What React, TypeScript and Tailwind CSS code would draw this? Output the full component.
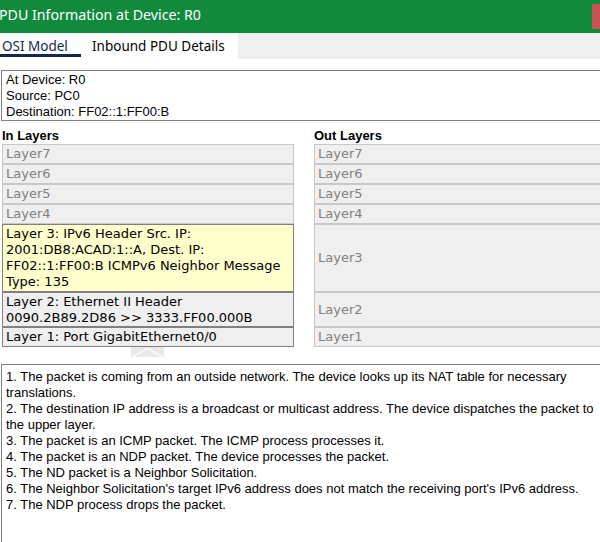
import React from "react"

const arial = "font-['Liberation_Sans',Arial,sans-serif]"
const verdana = "font-['DejaVu_Sans',Verdana,sans-serif]"

type Layer = { label: string; lines?: string[]; h: string; active?: boolean; hl?: boolean }

const inLayers: Layer[] = [
  { label: "Layer7", h: "h-[20px]" },
  { label: "Layer6", h: "h-[20px]" },
  { label: "Layer5", h: "h-[20px]" },
  { label: "Layer4", h: "h-[20px]" },
  {
    label: "",
    lines: [
      "Layer 3: IPv6 Header Src. IP:",
      "2001:DB8:ACAD:1::A, Dest. IP:",
      "FF02::1:FF00:B ICMPv6 Neighbor Message",
      "Type: 135",
    ],
    h: "h-[68px]",
    active: true,
    hl: true,
  },
  {
    label: "",
    lines: ["Layer 2: Ethernet II Header", "0090.2B89.2D86 >> 3333.FF00.000B"],
    h: "h-[35px]",
    active: true,
  },
  { label: "", lines: ["Layer 1: Port GigabitEthernet0/0"], h: "h-[20px]", active: true },
]

const outLayers: Layer[] = [
  { label: "Layer7", h: "h-[20px]" },
  { label: "Layer6", h: "h-[20px]" },
  { label: "Layer5", h: "h-[20px]" },
  { label: "Layer4", h: "h-[20px]" },
  { label: "Layer3", h: "h-[68px]" },
  { label: "Layer2", h: "h-[35px]" },
  { label: "Layer1", h: "h-[20px]" },
]

const steps = [
  "1. The packet is coming from an outside network. The device looks up its NAT table for necessary",
  "translations.",
  "2. The destination IP address is a broadcast or multicast address. The device dispatches the packet to",
  "the upper layer.",
  "3. The packet is an ICMP packet. The ICMP process processes it.",
  "4. The packet is an NDP packet. The device processes the packet.",
  "5. The ND packet is a Neighbor Solicitation.",
  "6. The Neighbor Solicitation's target IPv6 address does not match the receiving port's IPv6 address.",
  "7. The NDP process drops the packet.",
]

function LayerBox({ l }: { l: Layer }) {
  if (l.active) {
    return (
      <div
        className={`${l.h} border border-[#808080] ${l.hl ? "bg-[#ffffcc]" : "bg-[#efefef]"} px-[3px] py-[1px] text-black leading-[16px] whitespace-nowrap overflow-hidden`}
      >
        {l.lines!.map((t) => (
          <div key={t}>{t}</div>
        ))}
      </div>
    )
  }
  return (
    <div
      className={`${l.h} border border-[#c8c8c8] bg-[#efefef] px-[3px] flex items-center text-[#808080] leading-[16px]`}
    >
      {l.label}
    </div>
  )
}

export default function App() {
  return (
    <div className="w-[600px] h-[542px] overflow-hidden bg-white relative">
      {/* title bar */}
      <div className="h-[33px] bg-[#128a3e] flex items-center relative">
        <span className="text-white text-[14.2px] font-['Noto_Sans',sans-serif] -ml-[1px] leading-none pb-[2px]">
          PDU Information at Device: R0
        </span>
        <div className="absolute right-0 top-[4px] w-[8px] h-[25px] bg-[#c85254]" />
      </div>

      {/* tabs */}
      <div className="h-[26px] bg-[#efefef] flex font-['Noto_Sans',sans-serif] text-[13.5px]">
        <div className="w-[238px] bg-white flex">
          <div className="w-[81px] shrink-0 relative pl-[2px] pt-[3px] text-[#0f2a4f]">
            OSI Model
            <div className="absolute left-0 bottom-[2px] w-[81px] h-[3px] bg-[#12294d]" />
          </div>
          <div className="pl-[11px] pt-[3px] text-black whitespace-nowrap">Inbound PDU Details</div>
        </div>
      </div>

      {/* info */}
      <div
        className={`mt-[11px] ml-[1px] w-[620px] h-[51px] border border-[#808080] pl-[4px] pt-[1px] text-[13px] leading-[16px] text-black ${arial}`}
      >
        <div>At Device: R0</div>
        <div>Source: PC0</div>
        <div>Destination: FF02::1:FF00:B</div>
      </div>

      {/* layers */}
      <div className="flex gap-[20px] pl-[2px] mt-[7px]">
        <div className="w-[292px] shrink-0 flex flex-col">
          <div className={`h-[16px] font-bold text-[13px] leading-[16px] text-black ${arial}`}>In Layers</div>
          <div className={`flex flex-col text-[13px] ${verdana}`}>
            {inLayers.map((l, i) => (
              <LayerBox key={i} l={l} />
            ))}
          </div>
          <div className="ml-[129px] w-[33px] h-[10px] bg-[#e9e9e9]">
            <svg width="33" height="10" viewBox="0 0 33 10" className="block">
              <polyline points="2,9.5 16.5,1.5 31,9.5" fill="none" stroke="#ffffff" strokeWidth="1.3" />
            </svg>
          </div>
        </div>
        <div className="w-[300px] shrink-0 flex flex-col">
          <div className={`h-[16px] font-bold text-[13px] leading-[16px] text-black ${arial}`}>Out Layers</div>
          <div className={`flex flex-col text-[13px] ${verdana}`}>
            {outLayers.map((l, i) => (
              <LayerBox key={i} l={l} />
            ))}
          </div>
        </div>
      </div>

      {/* steps */}
      <div
        className={`mt-[7px] ml-[1px] w-[620px] h-[200px] border border-[#808080] pl-[4px] pt-[4px] text-[13px] leading-[16px] text-black whitespace-nowrap ${arial}`}
      >
        {steps.map((s) => (
          <div key={s}>{s}</div>
        ))}
      </div>
    </div>
  )
}
